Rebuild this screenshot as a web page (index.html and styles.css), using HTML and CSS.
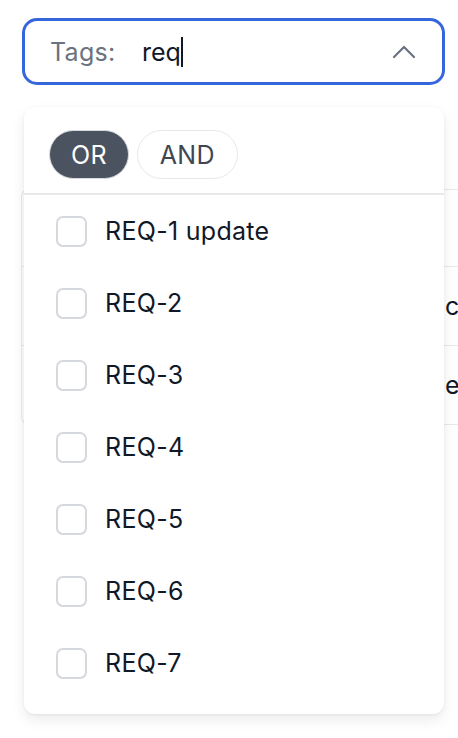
FILE: index.html
```html
<!DOCTYPE html>
<html lang="en">
<head>
    <meta charset="UTF-8">
    <meta name="viewport" content="width=device-width, initial-scale=1.0">
    <title>Tags filter</title>
    <link rel="stylesheet" href="styles.css">
</head>
<body>
    <div class="page">
        <div class="tag-input">
            <span class="tag-label">Tags:</span>
            <span class="tag-query">req<span class="caret"></span></span>
            <svg class="chevron" width="24" height="14" viewBox="0 0 24 14">
                <path d="M2 12 L12 2 L22 12" fill="none" stroke="#6b7280" stroke-width="2.2" stroke-linecap="round" stroke-linejoin="round"/>
            </svg>
        </div>

        <div class="table">
            <div class="table-row"><span class="cell-gap"></span><span class="cell"></span></div>
            <div class="table-row"><span class="cell-gap"></span><span class="cell">c</span></div>
            <div class="table-row"><span class="cell-gap"></span><span class="cell">e</span></div>
        </div>

        <div class="dropdown">
            <div class="mode-switch">
                <button class="mode active">OR</button>
                <button class="mode">AND</button>
            </div>
            <ul class="options">
                <li class="option"><span class="checkbox"></span>REQ-1 update</li>
                <li class="option"><span class="checkbox"></span>REQ-2</li>
                <li class="option"><span class="checkbox"></span>REQ-3</li>
                <li class="option"><span class="checkbox"></span>REQ-4</li>
                <li class="option"><span class="checkbox"></span>REQ-5</li>
                <li class="option"><span class="checkbox"></span>REQ-6</li>
                <li class="option"><span class="checkbox"></span>REQ-7</li>
            </ul>
        </div>
    </div>
</body>
</html>
```

FILE: styles.css
```css
body {
    margin: 0;
    padding: 0;
    background-color: #fff;
    font-family: Inter, "Noto Sans", sans-serif;
    overflow: hidden;
}

.page {
    position: relative;
    padding: 18px 0 0 22px;
    height: 720px;
}

.tag-input {
    width: 423px;
    height: 67px;
    box-sizing: border-box;
    border: 3px solid #3566dc;
    border-radius: 15px;
    display: flex;
    align-items: center;
    padding: 0 26px 0 25px;
    font-size: 25px;
}

.tag-label {
    color: #6b7280;
    width: 92px;
    letter-spacing: 0.3px;
}

.tag-query {
    color: #111827;
    flex: 1;
    display: flex;
    align-items: center;
}

.caret {
    display: inline-block;
    width: 2px;
    height: 30px;
    background-color: #111827;
}

.chevron {
    margin-top: 1px;
}

.table {
    margin: 104px 0 0 -1px;
    width: 480px;
    border: 1px solid #e9e9ec;
    border-right: none;
    border-radius: 8px 0 0 8px;
    font-size: 25px;
    color: #111827;
}

.table-row {
    display: grid;
    grid-template-columns: 423px 1fr;
    align-items: center;
    height: 78px;
    border-bottom: 1px solid #e9e9ec;
}

.table-row:first-child {
    height: 76px;
}

.table-row:last-child {
    border-bottom: none;
}

.dropdown {
    position: absolute;
    top: 107px;
    left: 24px;
    width: 420px;
    height: 607px;
    background-color: #fff;
    border-radius: 11px;
    box-shadow: 0 1px 3px rgba(0, 0, 0, 0.06), 0 6px 14px rgba(0, 0, 0, 0.08);
}

.mode-switch {
    display: flex;
    gap: 8px;
    padding: 23px 0 14px 25px;
    border-bottom: 2px solid #e8e8eb;
}

.mode {
    height: 49px;
    padding: 0 22px;
    border-radius: 25px;
    border: 1px solid #e5e7eb;
    background-color: #fff;
    color: #3f4652;
    font-family: inherit;
    font-size: 25px;
    letter-spacing: 0.3px;
}

.mode.active {
    background-color: #4b5360;
    border-color: #d8dbe0;
    color: #fff;
    padding: 0 21px;
}

.options {
    list-style: none;
    margin: 0;
    padding: 0;
}

.option {
    display: flex;
    align-items: center;
    height: 72px;
    padding-left: 32px;
    font-size: 25px;
    letter-spacing: 0.3px;
    color: #111827;
}

.checkbox {
    width: 27px;
    height: 27px;
    border: 2px solid #d5d8dd;
    border-radius: 7px;
    margin-right: 18px;
}
```
